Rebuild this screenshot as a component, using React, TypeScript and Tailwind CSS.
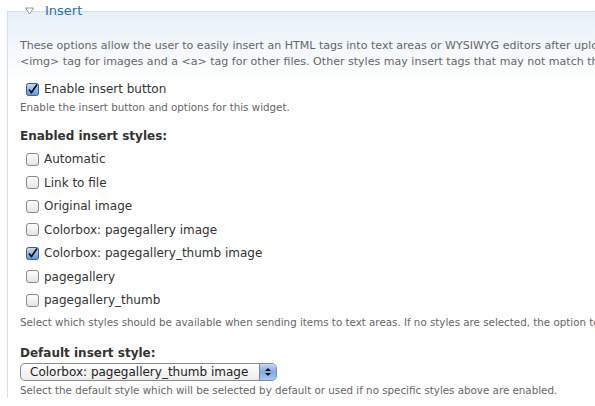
import React from "react";

const styles = [
  { label: "Automatic", checked: false },
  { label: "Link to file", checked: false },
  { label: "Original image", checked: false },
  { label: "Colorbox: pagegallery image", checked: false },
  { label: "Colorbox: pagegallery_thumb image", checked: true },
  { label: "pagegallery", checked: false },
  { label: "pagegallery_thumb", checked: false },
];

function Box({ checked }: { checked: boolean }) {
  if (checked) {
    return (
      <svg width="13" height="13" viewBox="0 0 13 13" className="shrink-0">
        <defs>
          <linearGradient id="cb-on" x1="0" y1="0" x2="0" y2="1">
            <stop offset="0" stopColor="#c9dcf5" />
            <stop offset="1" stopColor="#5d95dc" />
          </linearGradient>
        </defs>
        <rect x="0.5" y="0.5" width="12" height="12" rx="2" fill="url(#cb-on)" stroke="#3d5f8c" />
        <path d="M3 6.5 L5.5 9.5 L11 1.5" fill="none" stroke="#111" strokeWidth="1.8" />
      </svg>
    );
  }
  return (
    <svg width="13" height="13" viewBox="0 0 13 13" className="shrink-0">
      <defs>
        <linearGradient id="cb-off" x1="0" y1="0" x2="0" y2="1">
          <stop offset="0" stopColor="#ffffff" />
          <stop offset="1" stopColor="#e3e3e3" />
        </linearGradient>
      </defs>
      <rect x="0.5" y="0.5" width="12" height="12" rx="2.5" fill="url(#cb-off)" stroke="#8a8a8a" />
    </svg>
  );
}

export default function App() {
  return (
    <div className="w-[595px] h-[406px] overflow-hidden bg-white pl-[7px] pt-[5px] font-['DejaVu_Sans',Verdana,sans-serif]">
      {/* FIELDSET */}
      <div className="relative w-[700px] border-l border-t border-[#d3e0ee] mt-[6px] bg-gradient-to-b from-[#e8f0f8] to-white to-[70px] pl-[12px] pt-[26px]">
        {/* Legend */}
        <div className="absolute left-[14px] -top-[10px] flex items-center gap-[11px] px-[3px]">
          <svg width="9" height="8" viewBox="0 0 9 8">
            <path d="M0.5 1 L8.5 1 L4.5 7 Z" fill="white" stroke="#9a9a9a" strokeWidth="1" />
          </svg>
          <span className="text-[13px] text-[#2b6cb8] leading-[18px]">Insert</span>
        </div>

        <p className="text-[11.05px] leading-[16px] text-[#666] whitespace-nowrap">
          These options allow the user to easily insert an HTML tags into text areas or WYSIWYG editors after uploading a file or image.
          <br />
          &lt;img&gt; tag for images and a &lt;a&gt; tag for other files. Other styles may insert tags that may not match the file type.
        </p>

        <div className="mt-[10px] pl-[6px] flex items-center gap-[5px] text-[12px] text-[#333] leading-[18px]">
          <Box checked />
          <span>Enable insert button</span>
        </div>
        <p className="text-[10.3px] leading-[16px] text-[#666] mt-[1px]">Enable the insert button and options for this widget.</p>

        <div className="mt-[12px] text-[12px] font-bold text-[#333] leading-[18px]">Enabled insert styles:</div>
        <div className="flex flex-col gap-[5.5px] mt-[5px] pl-[6px]">
          {styles.map((s) => (
            <div key={s.label} className="flex items-center gap-[5px] text-[12px] text-[#333] leading-[18px]">
              <Box checked={s.checked} />
              <span>{s.label}</span>
            </div>
          ))}
        </div>
        <p className="text-[10.3px] leading-[16px] text-[#666] mt-[5px] whitespace-nowrap">
          Select which styles should be available when sending items to text areas. If no styles are selected, the option to use a style is not displayed.
        </p>

        <div className="mt-[14px] text-[12px] font-bold text-[#333] leading-[18px]">Default insert style:</div>
        <div className="mt-[1px] flex items-center w-[257px] h-[18px] rounded-[5px] border border-[#8c8c8c] bg-gradient-to-b from-white to-[#ececec]">
          <span className="flex-1 pl-[9px] text-[12px] text-[#222] leading-[16px]">Colorbox: pagegallery_thumb image</span>
          <div className="w-[17px] h-[16px] rounded-r-[4px] border-l border-[#6d87b5] bg-gradient-to-b from-[#c5d9f3] via-[#7eaae6] to-[#a9c8f0] flex flex-col items-center justify-center gap-[2px]">
            <svg width="6" height="3" viewBox="0 0 6 3"><path d="M0 3 L3 0 L6 3 Z" fill="#111" /></svg>
            <svg width="6" height="3" viewBox="0 0 6 3"><path d="M0 0 L3 3 L6 0 Z" fill="#111" /></svg>
          </div>
        </div>
        <p className="text-[10.3px] leading-[16px] text-[#666] mt-[1px] whitespace-nowrap">
          Select the default style which will be selected by default or used if no specific styles above are enabled.
        </p>
      </div>
    </div>
  );
}
